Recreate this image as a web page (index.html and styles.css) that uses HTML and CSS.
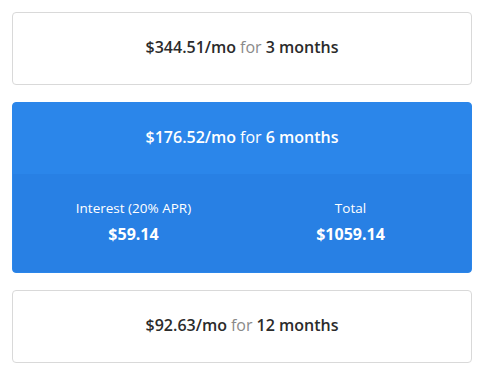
FILE: index.html
```html
<!DOCTYPE html>
<html lang="en">
<head>
    <meta charset="UTF-8">
    <meta name="viewport" content="width=device-width, initial-scale=1.0">
    <title>Payment Plans</title>
    <link rel="stylesheet" href="styles.css">
</head>
<body>

<div class="plans">
    <div class="plan">
        <div class="plan-head">
            <b>$344.51/mo</b> <span class="muted">for</span> <b>3 months</b>
        </div>
    </div>

    <div class="plan selected">
        <div class="plan-head">
            <b>$176.52/mo</b> <span class="muted">for</span> <b>6 months</b>
        </div>
        <div class="plan-details">
            <div class="detail">
                <div class="detail-label">Interest (20% APR)</div>
                <div class="detail-value">$59.14</div>
            </div>
            <div class="detail">
                <div class="detail-label">Total</div>
                <div class="detail-value">$1059.14</div>
            </div>
        </div>
    </div>

    <div class="plan">
        <div class="plan-head">
            <b>$92.63/mo</b> <span class="muted">for</span> <b>12 months</b>
        </div>
    </div>
</div>

</body>
</html>
```

FILE: styles.css
```css
body {
    font-family: "Open Sans", "Liberation Sans", sans-serif;
    background-color: #fff;
    margin: 0;
    padding: 12px 10px 12px 12px;
    color: #2b2b2b;
}

.plans {
    display: flex;
    flex-direction: column;
    gap: 17px;
}

.plan {
    border: 1px solid #d9d9d9;
    border-radius: 4px;
    background-color: #fff;
    overflow: hidden;
}

.plan-head {
    height: 71px;
    display: flex;
    align-items: center;
    justify-content: center;
    gap: 4px;
    font-size: 16px;
    white-space: pre;
    padding-bottom: 3px;
    box-sizing: border-box;
}

.plan-head b {
    font-weight: 600;
}

.muted {
    color: #8a8a8a;
}

.selected {
    border-color: #2b86ea;
    background-color: #2b86ea;
    color: #fff;
}

.selected .muted {
    color: #fff;
}

.plan-details {
    background-color: #2880e4;
    display: grid;
    grid-template-columns: 1fr 1fr;
    padding: 25px 12px 27px;
    text-align: center;
}

.detail-label {
    font-size: 13.5px;
    margin-bottom: 6px;
}

.detail-value {
    font-size: 16px;
    font-weight: 700;
}
```
